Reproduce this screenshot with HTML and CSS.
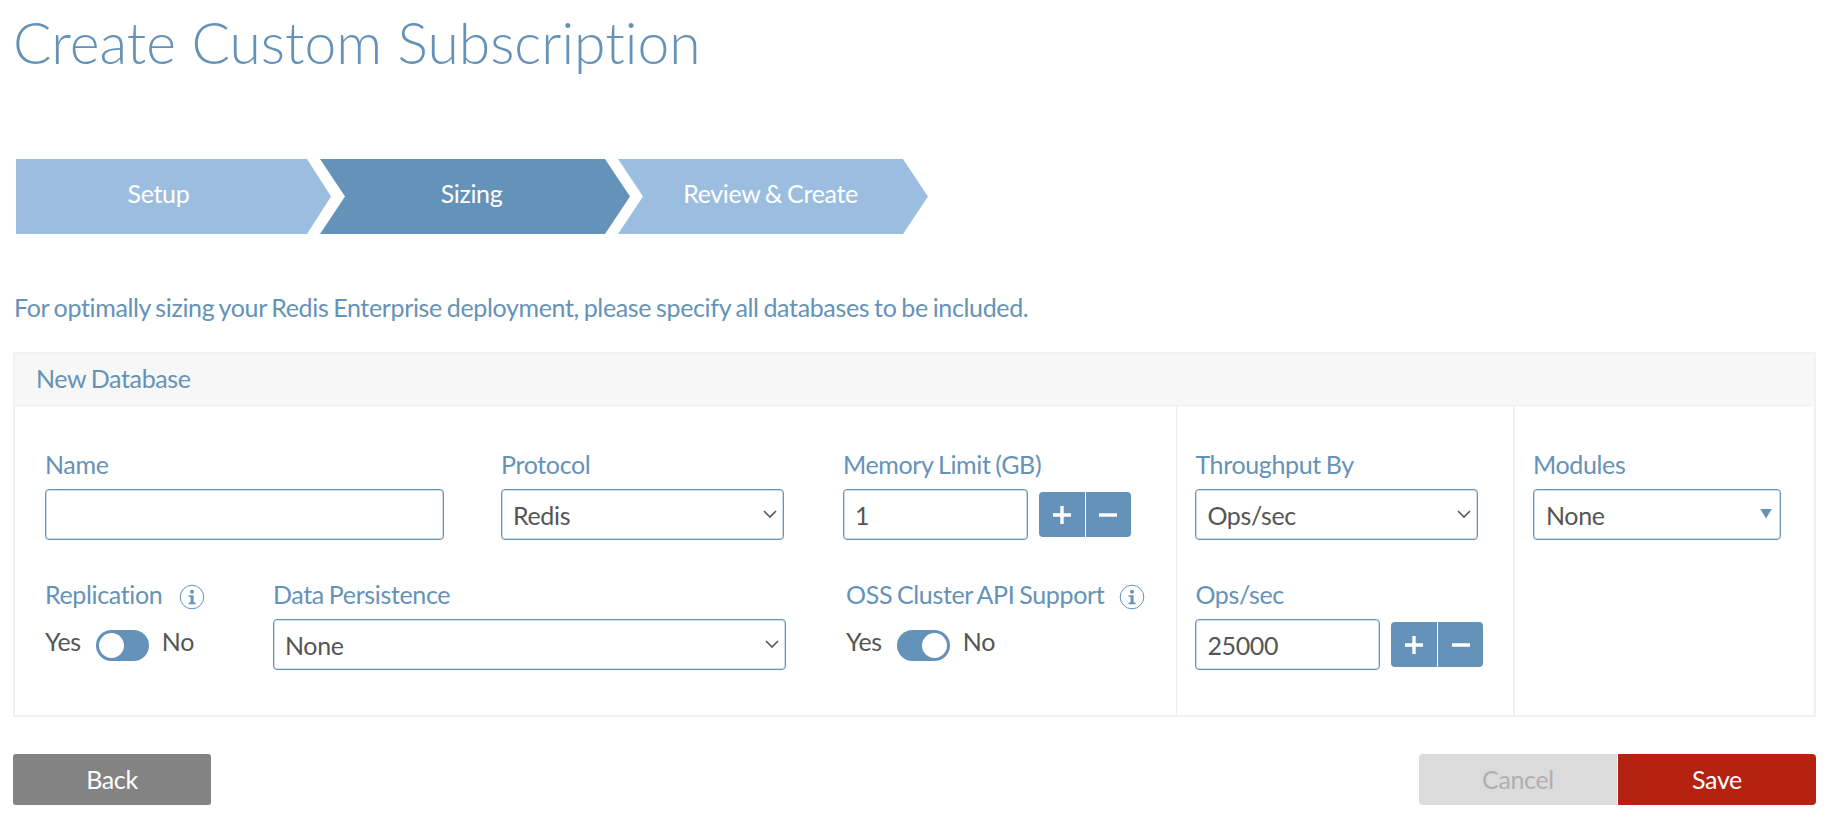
FILE: index.html
```html
<!DOCTYPE html>
<html lang="en">
<head>
<meta charset="utf-8">
<title>Create Custom Subscription</title>
<link rel="stylesheet" href="styles.css">
</head>
<body>
<svg class="defs" width="0" height="0">
  <symbol id="info" viewBox="0 0 26 26"><circle cx="13" cy="13" r="11.8" fill="none" stroke="currentColor" stroke-width="1"/><circle cx="13" cy="7.8" r="2" fill="currentColor"/><path d="M9.6 11.2h5v7.4h2v1.6H9.6v-1.6h2v-5.8h-2z" fill="currentColor"/></symbol>
  <symbol id="chevron" viewBox="0 0 14 8"><path d="M1 1l6 6 6-6" fill="none" stroke="#555" stroke-width="1.6"/></symbol>
  <symbol id="plus" viewBox="0 0 18 18"><path d="M0 9h18M9 0v18" fill="none" stroke="#fff" stroke-width="3.4"/></symbol>
  <symbol id="minus" viewBox="0 0 18 18"><path d="M0 9h18" fill="none" stroke="#fff" stroke-width="3.4"/></symbol>
</svg>
<main class="page">
  <h1 class="title"><span>Create Custom Subscription</span></h1>
  <nav class="steps">
    <div class="step first"><span>Setup</span></div>
    <div class="step active"><span>Sizing</span></div>
    <div class="step"><span>Review &amp; Create</span></div>
  </nav>
  <p class="intro"><span>For optimally sizing your Redis Enterprise deployment, please specify all databases to be included.</span></p>
  <section class="panel">
    <header class="panel-head"><span>New Database</span></header>
    <div class="panel-body">
      <div class="col main-col">
        <div class="row">
          <div class="field name"><label>Name</label><div class="box"></div></div>
          <div class="field protocol"><label>Protocol</label><div class="box select"><span>Redis</span><svg class="chev"><use href="#chevron"/></svg></div></div>
          <div class="field"><label>Memory Limit (GB)</label>
            <div class="stepper"><div class="box num"><span>1</span></div><div class="btns"><button class="pm"><svg><use href="#plus"/></svg></button><button class="pm"><svg><use href="#minus"/></svg></button></div></div>
          </div>
        </div>
        <div class="row">
          <div class="field replication"><label>Replication<svg class="info"><use href="#info"/></svg></label>
            <div class="switch"><span>Yes</span><i class="toggle"></i><span>No</span></div></div>
          <div class="field persistence"><label>Data Persistence</label><div class="box select"><span>None</span><svg class="chev"><use href="#chevron"/></svg></div></div>
          <div class="field oss"><label>OSS Cluster API Support<svg class="info"><use href="#info"/></svg></label>
            <div class="switch"><span>Yes</span><i class="toggle right"></i><span>No</span></div></div>
        </div>
      </div>
      <div class="col through-col">
        <div class="field wide"><label>Throughput By</label><div class="box select"><span>Ops/sec</span><svg class="chev"><use href="#chevron"/></svg></div></div>
        <div class="field"><label>Ops/sec</label>
          <div class="stepper"><div class="box num"><span>25000</span></div><div class="btns"><button class="pm"><svg><use href="#plus"/></svg></button><button class="pm"><svg><use href="#minus"/></svg></button></div></div>
        </div>
      </div>
      <div class="col mod-col">
        <div class="field modules"><label>Modules</label><div class="box select"><span>None</span><i class="tri"></i></div></div>
      </div>
    </div>
  </section>
  <footer class="actions">
    <button class="btn back">Back</button>
    <div class="right-actions"><button class="btn cancel">Cancel</button><button class="btn save">Save</button></div>
  </footer>
</main>
</body>
</html>
```
FILE: styles.css
```css
* { box-sizing: border-box; }
body { margin: 0; background: #fff; font-family: Lato, sans-serif; font-size: 25px; line-height: 30px; letter-spacing: -0.35px; word-spacing: -1.2px; font-variant-ligatures: none; color: #555; }
.defs { position: absolute; }
.page { width: 1833px; height: 824px; padding: 7px 17px 0 13px; overflow: hidden; white-space: nowrap; }
.title { margin: 0; height: 152px; font-size: 57px; line-height: 70px; letter-spacing: 0; word-spacing: 0; font-weight: 300; color: #6592b8; }
.steps { display: flex; margin-left: 3px; }
.step { width: 310px; height: 75px; margin-left: -12px; padding: 19px 5px 0 0; text-align: center; color: #fff; background: #9bbee0; clip-path: polygon(0 0, 285px 0, 100% 50%, 285px 100%, 0 100%, 25px 50%); }
.step.first { width: 315px; margin-left: 0; padding-right: 30px; clip-path: polygon(0 0, 291px 0, 100% 50%, 291px 100%, 0 100%); }
.step.active { background: #6592b8; margin-left: -11px; padding-right: 7px; }
.intro { margin: 58px 0 0 1px; color: #6592b8; }
.panel { margin-top: 30px; width: 1803px; height: 365px; border: 2px solid #f1f1f1; }
.panel-head { height: 52px; padding: 9px 0 0 21px; background: #f7f7f7; border-bottom: 1px solid #eee; color: #6592b8; }
.panel-body { display: flex; height: 309px; }
.col { display: flex; flex-direction: column; gap: 39px; padding-top: 43px; }
.main-col { width: 1161px; padding-left: 30px; }
.through-col { width: 337px; padding-left: 18.4px; border-left: 1px solid #eee; }
.mod-col { flex: 1; padding-left: 18px; border-left: 2px solid #f1f1f1; }
.row { display: flex; }
.field { height: 91px; }
.field label { display: flex; height: 40px; color: #6592b8; }
.box { display: flex; align-items: center; height: 51px; border: 1px solid #6592b8; box-shadow: inset 0 0 0 1px rgba(101, 146, 184, .3); border-radius: 4px; padding: 0 6px 0 11px; background: #fff; }
.select { justify-content: space-between; }
.name { width: 399px; margin-right: 57px; }
.protocol { width: 283px; margin-right: 59px; }
.replication { width: 228px; }
.persistence { width: 513px; margin-right: 59px; }
.oss { padding-left: 1px; }
.wide { width: 283px; }
.modules { width: 248px; }
.modules .box { padding: 1px 8px 0 12px; }
.chev { width: 14px; height: 8px; margin-top: -1px; }
.tri { width: 12px; height: 10px; margin-top: -3px; background: #6592b8; clip-path: polygon(0 0, 100% 0, 50% 100%); }
.stepper { display: flex; gap: 11px; align-items: center; }
.num { width: 185px; }
.btns { display: flex; gap: 1px; border-radius: 4px; overflow: hidden; }
.pm { display: flex; align-items: center; justify-content: center; width: 45.5px; height: 45px; padding: 0; border: 0; background: #6592b8; }
.pm svg { width: 18px; height: 18px; }
.info { width: 26px; height: 26px; margin: 5px 0 0 17px; }
.oss .info { margin-left: 15px; }
.switch { display: flex; padding-top: 7px; }
.toggle { width: 53px; height: 31px; margin: 4px 13px 0 15px; padding: 3px; border-radius: 16px; background: #6592b8; }
.toggle::before { content: ""; display: block; width: 25px; height: 25px; border-radius: 50%; background: #fff; }
.toggle.right::before { margin-left: 22px; }
.actions { display: flex; justify-content: space-between; margin-top: 37px; width: 1803px; }
.right-actions { display: flex; gap: 1px; }
.btn { width: 198px; height: 51px; padding: 0 0 2px; border: 0; font: inherit; letter-spacing: inherit; color: #fff; }
.back { background: #838383; border-radius: 3px; }
.cancel { background: #dbdbdb; color: #b0b0b0; border-radius: 4px 0 0 4px; }
.save { background: #b52210; border-radius: 0 4px 4px 0; }
```
